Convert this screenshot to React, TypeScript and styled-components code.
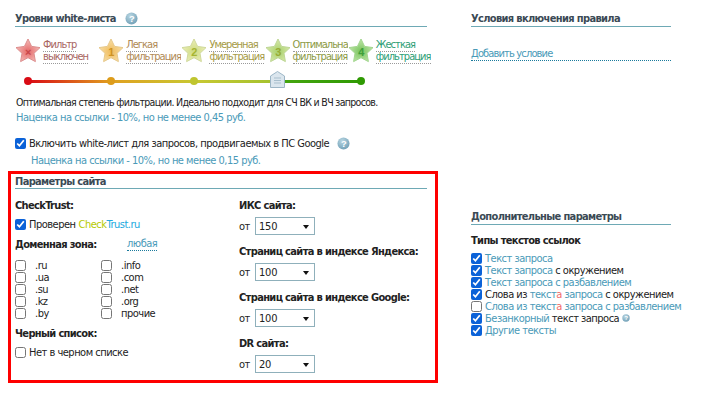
import React from "react";
import styled, { createGlobalStyle } from "styled-components";

const FONT = `"DejaVu Sans Condensed", "DejaVu Sans", sans-serif`;

const Global = createGlobalStyle`
  html, body { margin: 0; padding: 0; background: #fff; }
  body { font-family: ${FONT}; font-size: 11px; letter-spacing: -0.5px; color: #222; width: 703px; height: 400px; overflow: hidden; }
`;

const Page = styled.div`
  display: grid;
  grid-template-columns: 471px 232px;
  height: 400px;
  overflow: hidden;
`;
const LeftColumn = styled.div`
  display: flex;
  flex-direction: column;
`;
const RightColumn = styled.div`
  display: flex;
  flex-direction: column;
  width: 200px;
  padding-top: 11px;
`;
const TopArea = styled.div`
  width: 412px;
  margin-left: 15px;
  padding-top: 11px;
`;
const Heading = styled.h2`
  box-sizing: border-box;
  margin: 0;
  height: 16px;
  padding-top: 1px;
  line-height: 14px;
  font-family: ${FONT};
  font-size: 11px;
  letter-spacing: -0.65px;
  font-weight: 700;
  color: #3b4a55;
  border-bottom: 1px solid #6ea9b5;
  display: flex;
  align-items: flex-start;
  gap: 9px;
`;
const Levels = styled.div`
  display: flex;
  margin-top: 12px;
  height: 26px;
`;
const Level = styled.div`
  width: 83.2px;
  flex: none;
  display: flex;
  gap: 2px;
  overflow: hidden;
`;
const LevelLabel = styled.div<{ $c: string }>`
  font-size: 11px;
  letter-spacing: -0.95px;
  padding-top: 1px;
  color: ${(p) => p.$c};
  white-space: nowrap;
  span {
    display: table;
    border-bottom: 1px dotted #9a9a9a;
    line-height: 10px;
    padding-bottom: 1px;
    height: 10px;
  }
`;
const Track = styled.div`
  position: relative;
  height: 3px;
  margin: 15px 0 0 13px;
  width: 333px;
  border-radius: 2px;
  background: linear-gradient(to right, #d90b14 0%, #e0a020 25%, #c8c832 50%, #a4c22e 74%, #45a50f 76%, #2f9a03 100%);
`;
const Dot = styled.i<{ $x: number; $c: string }>`
  position: absolute;
  top: -3px;
  left: ${(p) => p.$x - 4}px;
  width: 8px;
  height: 8px;
  border-radius: 50%;
  background: ${(p) => p.$c};
`;
const Handle = styled.svg`
  position: absolute;
  left: 242px;
  top: -9px;
`;
const Info = styled.p`
  margin: 13px 0 0 1px;
  font-size: 10.5px;
  letter-spacing: -0.67px;
  line-height: 12px;
  color: #222;
  white-space: nowrap;
`;
const Price = styled.p<{ $indent?: number; $top?: number }>`
  margin: ${(p) => p.$top ?? 4}px 0 0 ${(p) => p.$indent ?? 1}px;
  line-height: 12px;
  color: #4a9ab8;
  white-space: nowrap;
`;
const CheckLine = styled.label<{ $top?: number; $gap?: number }>`
  display: flex;
  align-items: center;
  gap: ${(p) => p.$gap ?? 3}px;
  height: 12px;
  margin-top: ${(p) => p.$top ?? 0}px;
  white-space: nowrap;
`;
const Box = styled.input.attrs({ type: "checkbox", readOnly: true })`
  width: 11px;
  height: 11px;
  margin: 0;
  flex: none;
  accent-color: #0b62d8;
`;
const RedFrame = styled.section`
  box-sizing: border-box;
  margin: 4px 0 0 8px;
  width: 430px;
  height: 212px;
  border: 3px solid #fe0000;
  padding: 0 0 0 4px;
`;
const FrameHeading = styled(Heading)`
  width: 412px;
  height: 15px;
`;
const FrameBody = styled.div`
  display: grid;
  grid-template-columns: 224px 1fr;
`;
const SubTitle = styled.div<{ $top?: number }>`
  font-weight: 700;
  font-size: 11px;
  letter-spacing: -0.65px;
  line-height: 14px;
  color: #222;
  margin-top: ${(p) => p.$top ?? 0}px;
  white-space: nowrap;
`;
const ZoneHead = styled.div`
  display: grid;
  grid-template-columns: 112px auto;
  justify-content: start;
  margin-top: 8px;
  height: 14px;
`;
const AnyLink = styled.span`
  color: #4a9ab8;
  border-bottom: 1px dotted #1a7a9c;
  height: 12px;
  line-height: 11px;
`;
const Zones = styled.div`
  display: grid;
  grid-template-columns: 86px 1fr;
  grid-auto-flow: column;
  grid-template-rows: repeat(5, 12px);
  margin-top: 7px;
  width: 150px;
`;
const ColA = styled.div`
  padding-top: 10px;
  min-width: 0;
`;
const ColB = styled.div`
  padding-top: 10px;
`;
const FieldRow = styled.div`
  display: flex;
  align-items: center;
  height: 18px;
  margin-top: 4px;
  margin-bottom: 10px;
`;
const FromLabel = styled.span`
  width: 16px;
  flex: none;
`;
const SelectWrap = styled.div`
  position: relative;
  width: 60px;
  height: 18px;
  &::after {
    content: "";
    position: absolute;
    right: 6px;
    top: 8px;
    border-left: 3.5px solid transparent;
    border-right: 3.5px solid transparent;
    border-top: 4px solid #111;
    pointer-events: none;
  }
`;
const Select = styled.select`
  appearance: none;
  box-sizing: border-box;
  width: 100%;
  height: 100%;
  border: 1px solid #8fb0bb;
  border-radius: 0;
  background: #fff;
  color: #222;
  padding: 0 0 0 3px;
  font-family: ${FONT};
  font-size: 11px;
  letter-spacing: -0.2px;
`;
const AddLink = styled.span`
  display: table;
  margin-top: 21px;
  color: #4a9ab8;
  border-bottom: 1px dotted #1a7a9c;
  line-height: 12px;
  letter-spacing: -0.85px;
`;
const Extra = styled.div`
  margin-top: 148px;
`;
const LinkRows = styled.div`
  margin-top: 4px;
  display: flex;
  flex-direction: column;
`;
const Blue = styled.span`
  color: #4a9ab8;
`;
const Red = styled.span`
  color: #f06a6a;
`;
const Lime = styled.span`
  color: #b5c900;
`;
const Sky = styled.span`
  color: #20a8e0;
`;
const HelpGap = styled.span`
  width: 2px;
`;

function Help({ size = 13 }: { size?: number }) {
  const id = `h${size}`;
  return (
    <svg width={size} height={size} viewBox="0 0 14 14" style={{ flex: "none" }}>
      <defs>
        <radialGradient id={id} cx="40%" cy="30%" r="75%">
          <stop offset="0" stopColor="#b9d6e2" />
          <stop offset="1" stopColor="#6f9fb6" />
        </radialGradient>
      </defs>
      <circle cx="7" cy="7" r="6.5" fill={`url(#${id})`} />
      <text x="7" y="10.5" textAnchor="middle" fontSize="10" fontWeight="700" fontFamily="Liberation Sans" fill="#fff">?</text>
    </svg>
  );
}

function Star({ id, top, bottom, stroke, mark, markColor }: { id: string; top: string; bottom: string; stroke: string; mark: string; markColor: string }) {
  return (
    <svg width="26" height="25" viewBox="0 0 26 25" style={{ flex: "none", marginTop: -1 }}>
      <defs>
        <radialGradient id={id} cx="50%" cy="55%" r="60%">
          <stop offset="0" stopColor={bottom} />
          <stop offset="1" stopColor={top} />
        </radialGradient>
      </defs>
      <path
        d="M13 1 L16.6 8.4 L25 9.6 L19 15.3 L20.4 23.6 L13 19.7 L5.6 23.6 L7 15.3 L1 9.6 L9.4 8.4 Z"
        fill={`url(#${id})`}
        stroke={stroke}
        strokeWidth="1"
        strokeLinejoin="round"
      />
      <text x="13" y="18" textAnchor="middle" fontSize="11" fontWeight="700" fontFamily="Liberation Sans" fill={markColor}>{mark}</text>
    </svg>
  );
}

const levels = [
  { a: "Фильтр", b: "выключен", c: "#a8655f", top: "#f7c4c0", bottom: "#e46a6a", stroke: "#dc8d8d", mark: "×", mc: "#c9474a" },
  { a: "Легкая", b: "фильтрация", c: "#b08a55", top: "#fae2ae", bottom: "#efbc5d", stroke: "#e6c88a", mark: "1", mc: "#cf9322" },
  { a: "Умеренная", b: "фильтрация", c: "#a59a45", top: "#eef0bd", bottom: "#cfdb81", stroke: "#d0d99b", mark: "2", mc: "#a6b431" },
  { a: "Оптимальная", b: "фильтрация", c: "#8c9a45", top: "#dcebb0", bottom: "#a8d06c", stroke: "#bdd694", mark: "3", mc: "#97ab34" },
  { a: "Жесткая", b: "фильтрация", c: "#2d9e75", top: "#c8e8b0", bottom: "#76c45c", stroke: "#a2d68e", mark: "4", mc: "#3f9f3a" },
];

const zones = [".ru", ".ua", ".su", ".kz", ".by", ".info", ".com", ".net", ".org", "прочие"];
const Sel = ({ v }: { v: string }) => (
  <FieldRow>
    <FromLabel>от</FromLabel>
    <SelectWrap>
      <Select defaultValue={v}>
        <option>{v}</option>
      </Select>
    </SelectWrap>
  </FieldRow>
);

export default function App() {
  return (
    <>
      <Global />
      <Page>
        <LeftColumn>
          <TopArea>
            <Heading>
              Уровни white-листа
              <Help />
            </Heading>
            <Levels>
              {levels.map((l, i) => (
                <Level key={i}>
                  <Star id={`s${i}`} top={l.top} bottom={l.bottom} stroke={l.stroke} mark={l.mark} markColor={l.mc} />
                  <LevelLabel $c={l.c}>
                    <span>{l.a}</span>
                    <span>{l.b}</span>
                  </LevelLabel>
                </Level>
              ))}
            </Levels>
            <Track>
              <Dot $x={0} $c="#d90b14" />
              <Dot $x={83} $c="#dd9c1b" />
              <Dot $x={166} $c="#bfc52f" />
              <Dot $x={333} $c="#2f9a03" />
              <Handle width="15" height="17" viewBox="0 0 15 17">
                <path d="M7.5 .5 L14.5 5 V16.5 H.5 V5 Z" fill="#dbe6ee" stroke="#9db6c6" />
                <path d="M4 7h7M4 9.5h7M4 12h7" stroke="#a9bfcd" />
              </Handle>
            </Track>
            <Info>Оптимальная степень фильтрации. Идеально подходит для СЧ ВК и ВЧ запросов.</Info>
            <Price>Наценка на ссылки - 10%, но не менее 0,45 руб.</Price>
            <CheckLine $top={13}>
              <Box defaultChecked />
              Включить white-лист для запросов, продвигаемых в ПС Google
              <HelpGap />
              <Help />
            </CheckLine>
            <Price $indent={16} $top={6}>Наценка на ссылки - 10%, но не менее 0,15 руб.</Price>
          </TopArea>
          <RedFrame>
            <FrameHeading>Параметры сайта</FrameHeading>
            <FrameBody>
              <ColA>
                <SubTitle>CheckTrust:</SubTitle>
                <CheckLine $top={5}>
                  <Box defaultChecked />
                  Проверен <span><Lime>Check</Lime><Sky>Trust.ru</Sky></span>
                </CheckLine>
                <ZoneHead>
                  <SubTitle>Доменная зона:</SubTitle>
                  <AnyLink>любая</AnyLink>
                </ZoneHead>
                <Zones>
                  {zones.map((z) => (
                    <CheckLine key={z} $gap={9}>
                      <Box />
                      {z}
                    </CheckLine>
                  ))}
                </Zones>
                <SubTitle $top={8}>Черный список:</SubTitle>
                <CheckLine $top={5}>
                  <Box />
                  Нет в черном списке
                </CheckLine>
              </ColA>
              <ColB>
                <SubTitle>ИКС сайта:</SubTitle>
                <Sel v="150" />
                <SubTitle>Страниц сайта в индексе Яндекса:</SubTitle>
                <Sel v="100" />
                <SubTitle>Страниц сайта в индексе Google:</SubTitle>
                <Sel v="100" />
                <SubTitle>DR сайта:</SubTitle>
                <Sel v="20" />
              </ColB>
            </FrameBody>
          </RedFrame>
        </LeftColumn>
        <RightColumn>
          <Heading>Условия включения правила</Heading>
          <AddLink>Добавить условие</AddLink>
          <Extra>
            <Heading>Дополнительные параметры</Heading>
            <SubTitle $top={9}>Типы текстов ссылок</SubTitle>
            <LinkRows>
              <CheckLine><Box defaultChecked /><Blue>Текст запроса</Blue></CheckLine>
              <CheckLine><Box defaultChecked /><span><Blue>Текст запроса</Blue> с окружением</span></CheckLine>
              <CheckLine><Box defaultChecked /><Blue>Текст запроса с разбавлением</Blue></CheckLine>
              <CheckLine><Box defaultChecked /><span>Слова из <Blue>текст</Blue><Red>а</Red> <Blue>запроса</Blue> с окружением</span></CheckLine>
              <CheckLine><Box /><span><Blue>Слова из текст</Blue><Red>а</Red> <Blue>запроса с разбавлением</Blue></span></CheckLine>
              <CheckLine><Box defaultChecked /><span><Blue>Безанкорный</Blue> текст запроса</span><Help size={8} /></CheckLine>
              <CheckLine><Box defaultChecked /><Blue>Другие тексты</Blue></CheckLine>
            </LinkRows>
          </Extra>
        </RightColumn>
      </Page>
    </>
  );
}
